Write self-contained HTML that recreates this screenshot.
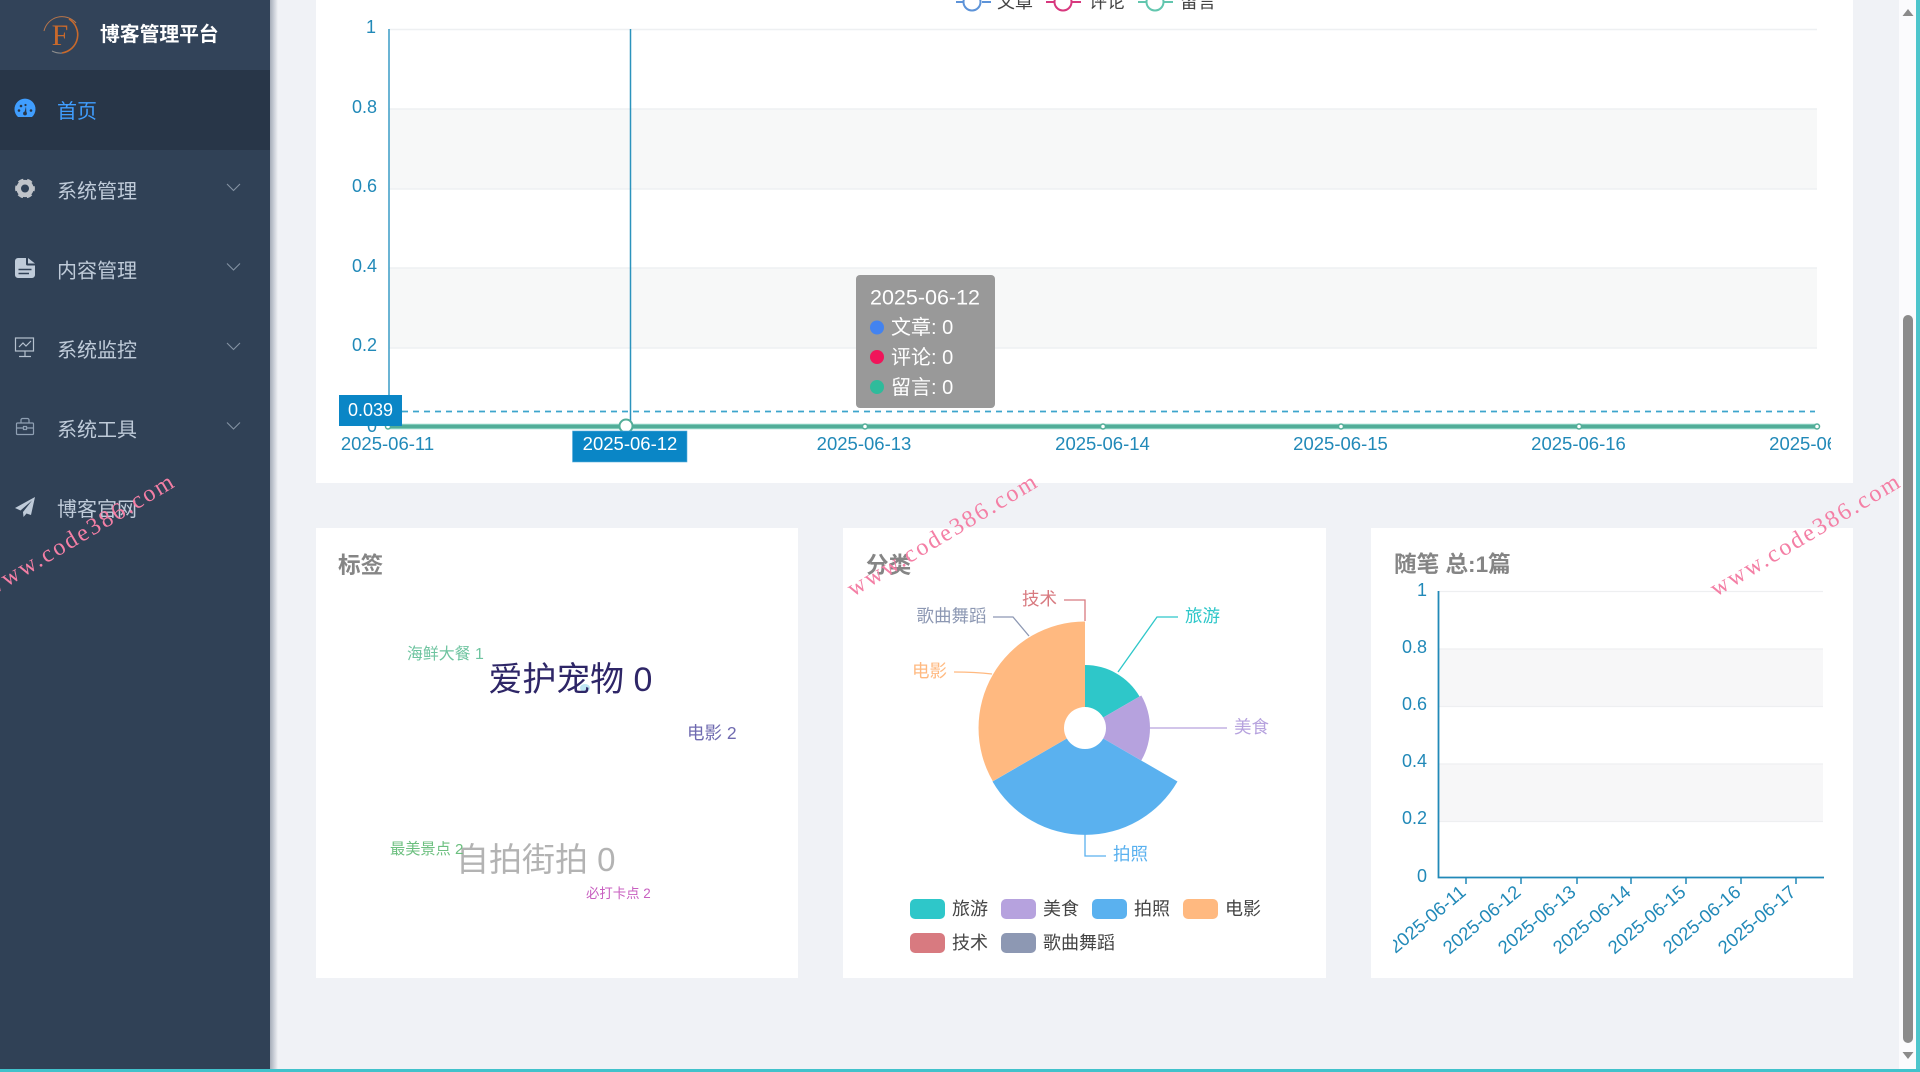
<!DOCTYPE html>
<html lang="zh-CN">
<head>
<meta charset="utf-8">
<title>博客管理平台</title>
<style>
html,body{margin:0;padding:0;width:1920px;height:1072px;overflow:hidden;background:#f0f2f6}
svg{display:block;position:absolute;left:0;top:0;filter:blur(.35px)}
text{font-family:"Liberation Sans","Noto Sans CJK SC",sans-serif}
.menu{font-size:20px;fill:#bfcbd9}
.ax{font-size:18px;fill:#2189b8}
.dt{font-size:18.5px;fill:#2189b8}
.title{font-size:22.6px;font-weight:700;fill:#858585}
.lg{font-size:18px;fill:#444}
.tt{font-size:20px;fill:#fff}
.wm{font-family:"Liberation Serif",serif;font-size:24px;letter-spacing:2.2px;fill:#f47fa5}
.pl{font-size:17.5px}
</style>
</head>
<body>
<svg width="1920" height="1072" viewBox="0 0 1920 1072" xmlns="http://www.w3.org/2000/svg">
<defs>
<linearGradient id="sh" x1="0" x2="1" y1="0" y2="0"><stop offset="0" stop-color="#7d8798" stop-opacity=".65"/><stop offset="1" stop-color="#7d8798" stop-opacity="0"/></linearGradient>
<clipPath id="c1"><rect x="316" y="0" width="1515" height="483"/></clipPath>
<clipPath id="c3"><rect x="1393" y="880" width="430" height="95"/></clipPath>
</defs>

<rect width="1920" height="1072" fill="#f0f2f6"/>

<!-- sidebar -->
<rect x="0" y="0" width="270" height="1069" fill="#304156"/>
<rect x="0" y="0" width="270" height="70" fill="#324359"/>
<rect x="0" y="70" width="270" height="80" fill="#283648"/>
<rect x="270" y="0" width="8" height="1069" fill="url(#sh)"/>

<!-- logo -->
<path d="M44 31 A18.5 18.5 0 0 1 76 23" fill="none" stroke="#b9764a" stroke-width="1"/>
<path d="M69 19 A18.5 18.5 0 0 1 62 53" fill="none" stroke="#c8692c" stroke-width="1.6"/>
<path d="M62 53 A18.5 18.5 0 0 1 52 51" fill="none" stroke="#8f8f8f" stroke-width="1"/>
<text x="60" y="45" text-anchor="middle" style="font-family:'Liberation Serif',serif;font-size:30px;fill:#c8692c">F</text>
<text x="100" y="41" style="font-size:19.8px;font-weight:700;fill:#fff">博客管理平台</text>

<!-- menu -->
<text class="menu" x="57" y="118" style="fill:#409eff">首页</text>
<text class="menu" x="57" y="198">系统管理</text>
<text class="menu" x="57" y="277.500">内容管理</text>
<text class="menu" x="57" y="357">系统监控</text>
<text class="menu" x="57" y="436.500">系统工具</text>
<text class="menu" x="57" y="516">博客官网</text>

<!-- chevrons -->
<g fill="none" stroke="#8492a3" stroke-width="1.1">
<path d="M227 184 L233.500 190.500 L240 184"/>
<path d="M227 263.500 L233.500 270 L240 263.500"/>
<path d="M227 343 L233.500 349.500 L240 343"/>
<path d="M227 422.500 L233.500 429 L240 422.500"/>
</g>

<!-- icon: dashboard -->
<path d="M18 117 A10.500 10.500 0 1 1 32 117 Z" fill="#409eff"/>
<g fill="#283648"><circle cx="19" cy="110.500" r="1.300"/><circle cx="21" cy="106" r="1.300"/><circle cx="25.500" cy="105" r="1.100"/><circle cx="31" cy="110.500" r="1.300"/><circle cx="25" cy="113.500" r="1.900"/><path d="M24.300 113 L26 106.500 L26.400 113 Z"/></g>

<!-- icon: gear -->
<circle cx="25" cy="188.500" r="6.300" fill="none" stroke="#bfc3c9" stroke-width="4.600"/>
<circle cx="25" cy="188.500" r="8.300" fill="none" stroke="#bfc3c9" stroke-width="3.200" stroke-dasharray="5 3.690" stroke-dashoffset="2.500"/>

<!-- icon: document -->
<path d="M15 261 A3 3 0 0 1 18 258 H26 V264 A1.500 1.500 0 0 0 27.500 265.500 H35 V275 A3 3 0 0 1 32 278 H18 A3 3 0 0 1 15 275 Z" fill="#bfcbd9"/>
<path d="M28 258 L35 263.500 H28 Z" fill="#bfcbd9"/>
<path d="M18.500 269.500 H31.500 M18.500 273.500 H29" stroke="#304156" stroke-width="1.500"/>

<!-- icon: monitor -->
<g fill="none" stroke="#b5c1cf" stroke-width="1.200">
<rect x="15.500" y="338" width="18" height="13"/>
<path d="M19 347 L23 343 L26 346 L31 341"/>
<path d="M25 351 V356 M19 356.500 H31"/>
</g>

<!-- icon: toolbox -->
<g fill="none" stroke="#8fa0b3" stroke-width="1.200">
<rect x="16.500" y="423" width="17" height="11.500" rx="1"/>
<path d="M21 423 V420 A1.500 1.500 0 0 1 22.500 418.500 H27.500 A1.500 1.500 0 0 1 29 420 V423"/>
<path d="M16.500 428 H23.500 M26.500 428 H33.500"/>
<rect x="23.500" y="426.500" width="3" height="3"/>
</g>

<!-- icon: paper plane -->
<path d="M35 497 L15 508 L20.500 510.500 L32 500.500 L23 512 L23.500 517 L26.500 513.500 L31 515 Z" fill="#bfcbd9"/>

<!-- main chart card -->
<rect x="316" y="0" width="1537" height="483" fill="#fff"/>
<rect x="389" y="109" width="1428" height="80" fill="#f7f8f8"/>
<rect x="389" y="268" width="1428" height="80" fill="#f7f8f8"/>
<g stroke="#eef0f2" stroke-width="1.500">
<path d="M389 29.500 H1817 M389 109 H1817 M389 189 H1817 M389 268 H1817 M389 348 H1817"/>
</g>

<!-- legend -->
<g fill="#fff" stroke-width="2">
<path d="M956 2 H964 M982 2 H991" stroke="#5d93d8"/><circle cx="972" cy="2" r="8.500" stroke="#5d93d8"/>
<path d="M1046 2 H1054 M1072 2 H1081" stroke="#d8387e"/><circle cx="1063" cy="2" r="8.500" stroke="#d8387e"/>
<path d="M1138 2 H1146 M1164 2 H1173" stroke="#62c6ae"/><circle cx="1155" cy="2" r="8.500" stroke="#62c6ae"/>
</g>
<text class="lg" x="997" y="8">文章</text>
<text class="lg" x="1089" y="8">评论</text>
<text class="lg" x="1180" y="8">留言</text>

<!-- y labels -->
<text class="ax" x="376" y="33" text-anchor="end">1</text>
<text class="ax" x="377" y="113" text-anchor="end">0.8</text>
<text class="ax" x="377" y="192" text-anchor="end">0.6</text>
<text class="ax" x="377" y="272" text-anchor="end">0.4</text>
<text class="ax" x="377" y="351" text-anchor="end">0.2</text>
<text class="ax" x="377" y="432" text-anchor="end">0</text>

<!-- axis + crosshair -->
<path d="M389 29 V426" stroke="#3a9cc6" stroke-width="1.500" fill="none"/>
<path d="M630.500 29 V426" stroke="#2b93bd" stroke-width="1.500" fill="none"/>
<path d="M402 411.500 H1815" stroke="#3da5cc" stroke-width="1.800" stroke-dasharray="6 5" fill="none"/>

<!-- series -->
<path d="M389 426.500 H1817" stroke="#8fd5c6" stroke-width="5.500" fill="none"/>
<path d="M389 426.500 H1817" stroke="#52ad98" stroke-width="3.500" fill="none"/>
<g fill="#fff" stroke="#52ad98" stroke-width="1.500">
<circle cx="865" cy="426.500" r="2.500"/><circle cx="1103" cy="426.500" r="2.500"/><circle cx="1341" cy="426.500" r="2.500"/><circle cx="1579" cy="426.500" r="2.500"/><circle cx="1817" cy="426.500" r="2.500"/>
<circle cx="388" cy="426.500" r="2.500"/>
<circle cx="626" cy="426" r="6.500" stroke-width="2"/>
</g>

<!-- x labels -->
<g clip-path="url(#c1)">
<text class="dt" x="387.500" y="450" text-anchor="middle">2025-06-11</text>
<text class="dt" x="864" y="450" text-anchor="middle">2025-06-13</text>
<text class="dt" x="1102.500" y="450" text-anchor="middle">2025-06-14</text>
<text class="dt" x="1340.500" y="450" text-anchor="middle">2025-06-15</text>
<text class="dt" x="1578.500" y="450" text-anchor="middle">2025-06-16</text>
<text class="dt" x="1816.500" y="450" text-anchor="middle">2025-06-17</text>
</g>

<!-- axis pointer labels -->
<rect x="339" y="395" width="63" height="31" fill="#0a86c6"/>
<text x="370.500" y="416" text-anchor="middle" style="font-size:18px;fill:#fff">0.039</text>
<rect x="572.500" y="431" width="114.500" height="31" fill="#0a86c6" stroke="#5bb0dc" stroke-width=".6"/>
<text x="630" y="450" text-anchor="middle" style="font-size:18.500px;fill:#fff">2025-06-12</text>

<!-- tooltip -->
<rect x="856" y="275" width="139" height="133" rx="4" fill="#979797" fill-opacity=".98"/>
<text x="870" y="304.500" style="font-size:21.500px;fill:#fff">2025-06-12</text>
<circle cx="877" cy="327.500" r="7" fill="#4383f0"/>
<text class="tt" x="891" y="334">文章: 0</text>
<circle cx="877" cy="357" r="7" fill="#f0145a"/>
<text class="tt" x="891" y="364">评论: 0</text>
<circle cx="877" cy="387" r="7" fill="#2fbb9b"/>
<text class="tt" x="891" y="394">留言: 0</text>

<!-- tags card -->
<rect x="316" y="528" width="482" height="450" fill="#fff"/>
<text class="title" x="338" y="573">标签</text>
<text x="407" y="659" style="font-size:15.900px;fill:#6fc4a0">海鲜大餐 1</text>
<ellipse cx="585" cy="688" rx="5" ry="4" fill="#bfe6f2"/>
<text x="488.500" y="691" style="font-size:33.900px;fill:#2e2667">爱护宠物 0</text>
<text x="687" y="739" style="font-size:17.500px;fill:#6f6ab0">电影 2</text>
<text x="456" y="871" style="font-size:33px;fill:#b3b3b3">自拍街拍 0</text>
<text x="390" y="854" style="font-size:15.200px;fill:#6cbf7f">最美景点 2</text>
<text x="586" y="898" style="font-size:13.400px;fill:#c85fc0">必打卡点 2</text>

<!-- category card -->
<rect x="843" y="528" width="483" height="450" fill="#fff"/>
<text class="title" x="866" y="573">分类</text>
<path d="M1085 665 A63 63 0 0 1 1139.560 696.500 L1103.190 717.500 A21 21 0 0 0 1085 707 Z" fill="#2ec7c9"/>
<path d="M1141.290 695.500 A65 65 0 0 1 1141.290 760.500 L1103.190 738.500 A21 21 0 0 0 1103.190 717.500 Z" fill="#b6a2de"/>
<path d="M1177.500 781.500 A106.800 106.800 0 0 1 992.500 781.500 L1066.810 738.500 A21 21 0 0 0 1103.190 738.500 Z" fill="#5ab1ef"/>
<path d="M992.800 781.250 A106.500 106.500 0 0 1 1085 621.500 L1085 707 A21 21 0 0 0 1066.810 738.500 Z" fill="#ffb980"/>
<g fill="none" stroke-width="1.300">
<path d="M1118 672 L1157 617 H1178" stroke="#2ec7c9"/>
<path d="M1149 728 H1227" stroke="#b6a2de"/>
<path d="M1085 834 V856 H1106" stroke="#5ab1ef"/>
<path d="M992 674 Q975 672 954 672" stroke="#ffb980"/>
<path d="M1029 636 L1013 617 H993" stroke="#8d98b3"/>
<path d="M1085 621 V600 H1064" stroke="#d87a80"/>
</g>
<text class="pl" x="1185" y="622" fill="#2ec7c9">旅游</text>
<text class="pl" x="1234" y="733" fill="#b6a2de">美食</text>
<text class="pl" x="1113" y="860" fill="#5ab1ef">拍照</text>
<text class="pl" x="912" y="677" fill="#ffb980">电影</text>
<text class="pl" x="916.500" y="622" fill="#8d98b3">歌曲舞蹈</text>
<text class="pl" x="1022" y="605" fill="#d87a80">技术</text>

<rect x="910" y="899" width="35" height="20" rx="5" fill="#2ec7c9"/>
<rect x="1001" y="899" width="35" height="20" rx="5" fill="#b6a2de"/>
<rect x="1092" y="899" width="35" height="20" rx="5" fill="#5ab1ef"/>
<rect x="1183" y="899" width="35" height="20" rx="5" fill="#ffb980"/>
<rect x="910" y="933" width="35" height="20" rx="5" fill="#d87a80"/>
<rect x="1001" y="933" width="35" height="20" rx="5" fill="#8d98b3"/>
<text class="lg" x="952" y="915">旅游</text>
<text class="lg" x="1043" y="915">美食</text>
<text class="lg" x="1134" y="915">拍照</text>
<text class="lg" x="1225" y="915">电影</text>
<text class="lg" x="952" y="949">技术</text>
<text class="lg" x="1043" y="949">歌曲舞蹈</text>

<!-- essays card -->
<rect x="1371" y="528" width="482" height="450" fill="#fff"/>
<text class="title" x="1394" y="572">随笔 总:1篇</text>
<rect x="1438" y="649" width="385" height="57" fill="#f7f7f8"/>
<rect x="1438" y="764" width="385" height="58" fill="#f7f7f8"/>
<path d="M1438 591.500 H1823 M1438 649 H1823 M1438 706.500 H1823 M1438 764 H1823 M1438 821.500 H1823" stroke="#eeeff1" stroke-width="1.200" fill="none"/>
<path d="M1438.500 591 V877.500 H1824" stroke="#2189b8" stroke-width="1.800" fill="none"/>
<path d="M1466 877 V884 M1521 877 V884 M1577 877 V884 M1631 877 V884 M1686 877 V884 M1741 877 V884 M1796 877 V884" stroke="#2189b8" stroke-width="1.500" fill="none"/>
<text class="ax" x="1427" y="596" text-anchor="end">1</text>
<text class="ax" x="1427" y="653" text-anchor="end">0.8</text>
<text class="ax" x="1427" y="710" text-anchor="end">0.6</text>
<text class="ax" x="1427" y="767" text-anchor="end">0.4</text>
<text class="ax" x="1427" y="824" text-anchor="end">0.2</text>
<text class="ax" x="1427" y="882" text-anchor="end">0</text>
<g clip-path="url(#c3)">
<text class="dt" text-anchor="end" transform="translate(1467 894) rotate(-40)">2025-06-11</text>
<text class="dt" text-anchor="end" transform="translate(1522 894) rotate(-40)">2025-06-12</text>
<text class="dt" text-anchor="end" transform="translate(1577 894) rotate(-40)">2025-06-13</text>
<text class="dt" text-anchor="end" transform="translate(1632 894) rotate(-40)">2025-06-14</text>
<text class="dt" text-anchor="end" transform="translate(1687 894) rotate(-40)">2025-06-15</text>
<text class="dt" text-anchor="end" transform="translate(1742 894) rotate(-40)">2025-06-16</text>
<text class="dt" text-anchor="end" transform="translate(1797 894) rotate(-40)">2025-06-17</text>
</g>

<!-- scrollbar -->
<rect x="1899" y="0" width="17" height="1069" fill="#fbfbfd"/>
<rect x="1903" y="315" width="10" height="728" rx="5" fill="#8b8b8b"/>
<path d="M1902.500 16 L1908 9 L1913.500 16 Z" fill="#8b8b8b"/>
<path d="M1902.500 1052 L1908 1059 L1913.500 1052 Z" fill="#8b8b8b"/>

<!-- window border -->
<rect x="1916" y="0" width="4" height="1072" fill="#4dc5cc"/>
<rect x="0" y="1069" width="1920" height="3" fill="#41c2cb"/>

<!-- watermarks -->
<text class="wm" transform="translate(-10 597) rotate(-30.800)">www.code386.com</text>
<text class="wm" transform="translate(853 597) rotate(-30.800)">www.code386.com</text>
<text class="wm" transform="translate(1716 597) rotate(-30.800)">www.code386.com</text>
</svg>
</body>
</html>
